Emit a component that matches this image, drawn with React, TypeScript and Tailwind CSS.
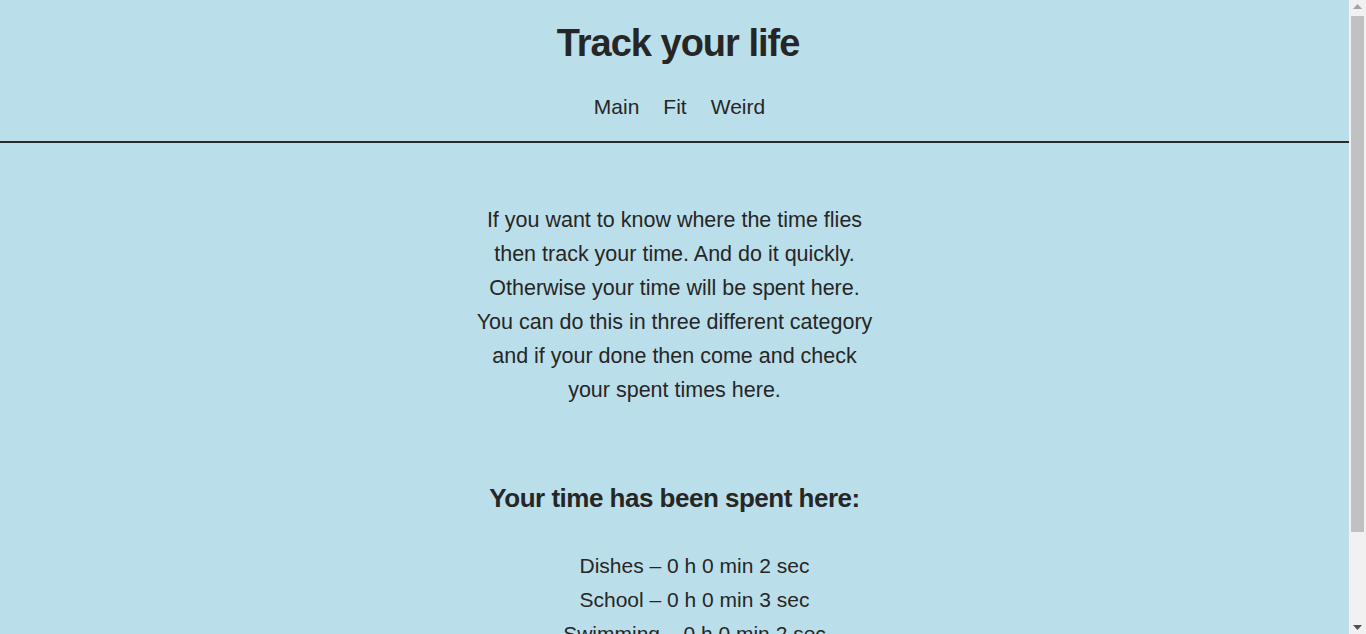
import React from 'react';

const lines = [
  'If you want to know where the time flies',
  'then track your time. And do it quickly.',
  'Otherwise your time will be spent here.',
  'You can do this in three different category',
  'and if your done then come and check',
  'your spent times here.',
];

const spent = [
  { name: 'Dishes', h: 0, m: 0, s: 2 },
  { name: 'School', h: 0, m: 0, s: 3 },
  { name: 'Swimming', h: 0, m: 0, s: 2 },
];

// page-level scrollbar as seen in the screenshot
function ScrollTrack() {
  return (
    <div className="relative w-[17px] shrink-0 bg-[#f1f1f1]" aria-hidden>
      <svg className="absolute left-[4px] top-[4px]" width="9" height="5" viewBox="0 0 9 5">
        <path d="M0 5 L4.5 0 L9 5 Z" fill="#a3a3a3" />
      </svg>
      <div className="absolute left-[2px] right-[2px] top-[16px] h-[516px] bg-[#c1c1c1]" />
      <svg className="absolute left-[4px] bottom-[4px]" width="9" height="5" viewBox="0 0 9 5">
        <path d="M0 0 L9 0 L4.5 5 Z" fill="#505050" />
      </svg>
    </div>
  );
}

export default function App() {
  return (
    <div className="flex h-screen bg-[#bbdfea] text-[#262626] font-['Liberation_Sans',sans-serif]">
      <div className="flex-1 overflow-y-auto">
        <header className="border-b-2 border-[#2a2a2a]">
          <h1 className="pt-[16px] pl-[7px] text-center text-[38px] leading-[54px] font-semibold tracking-[-1px]">
            Track your life
          </h1>
          <nav className="flex justify-center gap-[24px] pt-[23px] pb-[20px] pl-[10px] text-[21px] leading-[28px]">
            <a href="#" className="hover:underline">Main</a>
            <a href="#" className="hover:underline">Fit</a>
            <a href="#" className="hover:underline">Weird</a>
          </nav>
        </header>

        <main className="flex flex-col items-center pt-[60px] pb-[70px]">
          <p className="text-center text-[21.5px] leading-[34px]">
            {lines.map((l) => (
              <span key={l} className="block">{l}</span>
            ))}
          </p>

          <h2 className="mt-[73px] text-[26px] leading-[36px] font-semibold tracking-[-0.5px]">
            Your time has been spent here:
          </h2>

          <ul className="mt-[33px] pl-[40px] text-center text-[21px] leading-[34px]">
            {spent.map((t) => (
              <li key={t.name}>
                {t.name} – {t.h} h {t.m} min {t.s} sec
              </li>
            ))}
          </ul>
        </main>
      </div>
      <ScrollTrack />
    </div>
  );
}
